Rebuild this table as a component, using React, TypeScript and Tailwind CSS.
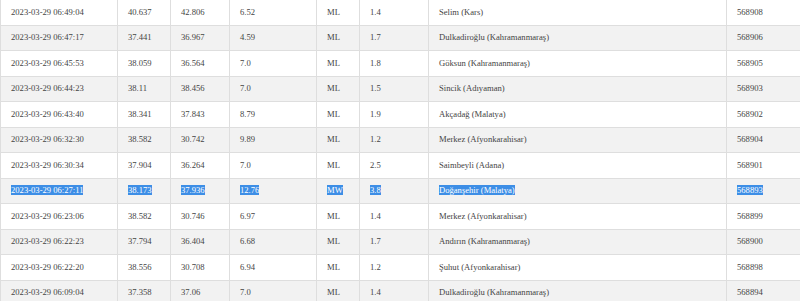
const ROWS = [
  ['2023-03-29 06:49:04', '40.637', '42.806', '6.52', 'ML', '1.4', 'Selim (Kars)', '568908'],
  ['2023-03-29 06:47:17', '37.441', '36.967', '4.59', 'ML', '1.7', 'Dulkadiroğlu (Kahramanmaraş)', '568906'],
  ['2023-03-29 06:45:53', '38.059', '36.564', '7.0', 'ML', '1.8', 'Göksun (Kahramanmaraş)', '568905'],
  ['2023-03-29 06:44:23', '38.11', '38.456', '7.0', 'ML', '1.5', 'Sincik (Adıyaman)', '568903'],
  ['2023-03-29 06:43:40', '38.341', '37.843', '8.79', 'ML', '1.9', 'Akçadağ (Malatya)', '568902'],
  ['2023-03-29 06:32:30', '38.582', '30.742', '9.89', 'ML', '1.2', 'Merkez (Afyonkarahisar)', '568904'],
  ['2023-03-29 06:30:34', '37.904', '36.264', '7.0', 'ML', '2.5', 'Saimbeyli (Adana)', '568901'],
  ['2023-03-29 06:27:11', '38.173', '37.936', '12.76', 'MW', '3.8', 'Doğanşehir (Malatya)', '568893'],
  ['2023-03-29 06:23:06', '38.582', '30.746', '6.97', 'ML', '1.4', 'Merkez (Afyonkarahisar)', '568899'],
  ['2023-03-29 06:22:23', '37.794', '36.404', '6.68', 'ML', '1.7', 'Andırın (Kahramanmaraş)', '568900'],
  ['2023-03-29 06:22:20', '38.556', '30.708', '6.94', 'ML', '1.2', 'Şuhut (Afyonkarahisar)', '568898'],
  ['2023-03-29 06:09:04', '37.358', '37.06', '7.0', 'ML', '1.4', 'Dulkadiroğlu (Kahramanmaraş)', '568894'],
];

// column widths measured off the screenshot
const WIDTHS = [117, 53, 59, 87, 43, 69, 298, 100];
const SELECTED = 7;

export default function App() {
  return (
    <div className="w-[800px] h-[301px] overflow-hidden bg-white">
      <table
        className="table-fixed border-collapse w-[826px] min-w-[826px] -mt-[1px] text-[8.6px] text-[#444]"
        style={{ fontFamily: '"Liberation Serif", "Times New Roman", serif' }}
      >
        <colgroup>
          {WIDTHS.map((w, i) => (
            <col key={i} style={{ width: w }} />
          ))}
        </colgroup>
        <tbody>
          {ROWS.map((row, r) => (
            <tr key={r} className={`h-[25.5px] ${r % 2 === 1 ? 'bg-[#f2f2f2]' : 'bg-white'}`}>
              {row.map((cell, c) => (
                <td key={c} className="border border-[#dedede] pl-[10px] align-middle whitespace-nowrap leading-[11px]">
                  {r === SELECTED ? (
                    <span className="bg-[#3d8ee6] text-white">{cell}</span>
                  ) : (
                    cell
                  )}
                </td>
              ))}
            </tr>
          ))}
        </tbody>
      </table>
    </div>
  );
}
